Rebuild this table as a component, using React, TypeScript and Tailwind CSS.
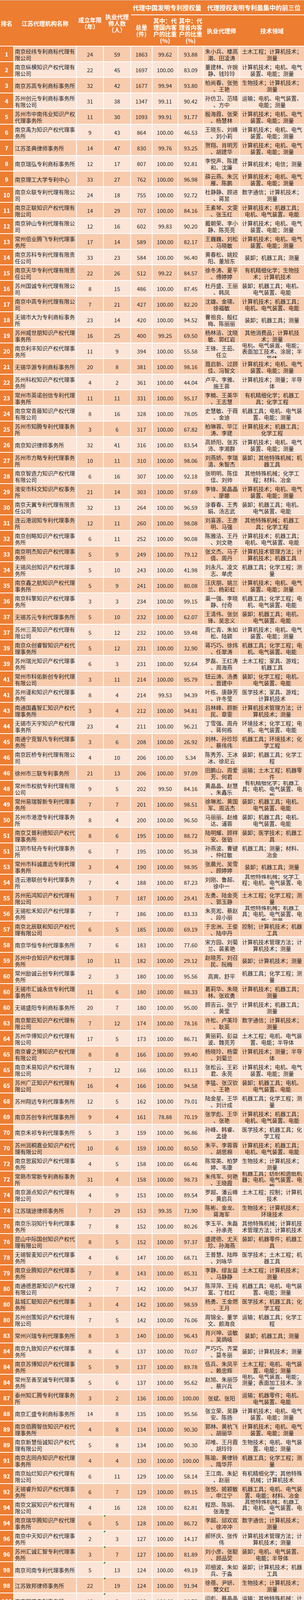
const COLS =
  "grid grid-cols-[34px_159px_67px_68px_53px_64px_63px_91px_164px] gap-x-[2px]";

// rank|name|years|staff|total|national%|province%|agents (/ = line break)|fields (/ = line break)
const RAW = `1|南京经纬专利商标代理有限公司|24|59|1863|99.62|93.88|朱小兵、楼高/潮、田凌涛|土木工程；计算机技术；/测量
2|南京纵横知识产权代理有限公司|22|45|1697|100.00|83.09|董建林、许婉/静、钱玲玲|计算机技术；电机、电气/装置、电能；测量
3|南京苏高专利商标事务所|32|42|1677|99.94|93.80|柏尚春、张弛/、王艳|生物技术；计算机技术；/测量
4|苏州创元专利商标事务所有限公司|31|38|1347|99.11|90.42|孙仿卫、范晴/、方中|运输；电机、电气装置、/电能；测量
5|苏州市中南伟业知识产权代理事务所|11|30|1093|99.91|91.77|殷海霞、张荣/、杨慧林|计算机技术；电机、电气/装置、电能；测量
6|南京禹为知识产权代理事务所|9|43|864|100.00|46.53|王晓东、刘峰/、刘小莉|计算机技术；电机、电气/装置、电能；测量
7|江苏圣典律师事务所|14|47|830|99.76|93.25|贺翔、肖明芳/、胡建华|计算机技术；电机、电气/装置、电能；测量
8|南京瑞弘专利商标事务所|12|17|807|100.00|92.81|李悦声、陈建/和、沈廉|计算机技术；电信；测量
9|南京理工大学专利中心|33|27|762|100.00|96.98|薛云燕、朱沉/雁、陈鹏|计算机技术；电机、电气/装置、电能；测量
10|南京众联专利代理有限公司|24|18|755|100.00|92.72|杜静静、顾进/、蒋昱|数字通信；计算机技术；/测量
11|南京正联知识产权代理有限公司|14|29|707|100.00|84.16|王素琴、文雯/、张玉红|计算机技术；机器工具；/电机、电气装置、电能
12|南京钟山专利代理有限公司|12|16|602|99.83|90.20|戴朝荣、李小/静、陈亮亮|计算机技术；电机、电气/装置、电能；测量
13|常州佰业腾飞专利代理事务所|17|14|589|100.00|82.17|王巍巍、刘松/、马晓敏|计算机技术；电机、电气/装置、电能；测量
14|南京苏科专利代理有限责任公司|33|23|584|100.00|96.40|黄春松、姚姣/阳、董旭东|装卸；机器工具；测量
15|南京天华专利代理有限责任公司|22|26|512|99.22|84.57|徐冬涛、夏平/、傅婷婷|有机精细化学；生物技/术；计算机技术
16|苏州国诚专利代理有限公司|8|15|486|100.00|87.45|杜丹盛、王丽/、韩凤|装卸；机器工具；电机、/电气装置、电能
17|南京中高专利代理有限公司|7|21|427|100.00|82.20|沈雄、金啸、/徐福敏|计算机技术；机器工具；/电机、电气装置、电能
18|无锡市大为专利商标事务所|23|14|420|100.00|94.52|曹祖良、殷红/梅、陈丽丽|装卸；机器工具；测量
19|苏州威世朋知识产权代理事务所|16|25|400|99.25|69.50|杨林洁、沈晓/敏、郭红岩|其他消费品；计算机技/术；测量
20|南京利丰知识产权代理事务所|11|9|394|100.00|55.58|王锋、王茹、/任立|电机、电气装置、电能；/表面加工技术、涂层；半/导体
21|无锡华源专利商标事务所|20|8|381|100.00|98.16|聂启新、过顾/佳、冯智文|计算机技术；电机、电气/装置、电能；测量
22|苏州科权知识产权代理事务所|4|2|361|100.00|44.04|卢平、李雅、/施王蓉|计算机技术；测量；半导/体
23|常州市英诺创信专利代理事务所|11|11|331|100.00|95.17|李楠、王美华/、王志慧|有机精细化学；机器工/具；化学工程
24|南京常青藤知识产权代理有限公司|8|16|328|100.00|78.05|史慧敏、于薇/、金迪|机器工具；电机、电气装/置、电能；测量
25|苏州市知腾专利代理事务所|3|6|317|100.00|67.82|柏琳蓉、毕江/涛、李建|计算机技术；机器工具；/化学工程
26|南京知识律师事务所|32|41|316|100.00|83.54|高娇阳、张苏/沛、李湘群|计算机技术；电机、电气/装置、电能；测量
27|苏州市方略专利代理事务所|10|11|310|100.00|98.06|刘燕娇、李瑞/清、朱智杰|装卸；其他特殊机械；机/器工具
28|南京智造力知识产权代理有限公司|6|16|307|100.00|92.18|张明明、陈佳/佳、刘帅|其他特殊机械；化学工/程；材料、冶金
29|淮安市科文知识产权事务所|21|14|303|100.00|97.69|李锋、吴晶晶/、廖娜|计算机技术；电机、电气/装置、电能；测量
30|南京天翼专利代理有限责任公司|32|13|264|100.00|96.59|涂春春、王秀/娟、汤志武|装卸；机器工具；电机、/电气装置、电能
31|连云港润知专利代理事务所|12|11|260|100.00|98.08|刘喜莲、王彦/明、马强|其他特殊机械；机器工/具；化学工程
32|南京创略知识产权代理事务所|6|11|252|100.00|90.08|陈雅洁、王丹/、刘文艳|计算机技术；机器工具；/电机、电气装置、电能
33|南京明杰知识产权代理事务所|5|9|249|100.00|79.12|张文杰、马子/倩、周丹|计算机技术管理方法；计/算机技术；机器工具
34|无锡风创知识产权代理事务所|5|10|243|100.00|41.98|刘永凡、凌文/志、单虎|机器工具；化学工程；测/量
35|南京鑫之航知识产权代理事务所|5|9|241|100.00|80.08|汪庆朋、姚兰/兰、杨彩虹|计算机技术；电机、电气/装置、电能；测量
36|南京科擎知识产权代理事务所|3|3|234|100.00|99.15|巢一强、李晓/静、付奇|机器工具；化学工程；电/机、电气装置、电能
37|无锡苏元专利代理事务所|5|10|232|100.00|62.07|王清伟、张剑/锋、吴忠义|装卸；机器工具；电机、/电气装置、电能
37|苏州三英知识产权代理有限公司|5|12|232|100.00|59.48|周仁青、朱如/松、陆颖|计算机技术；电机、电气/装置、电能；测量
39|南京众创睿智知识产权代理事务所|5|12|231|100.00|32.90|蒋巧巧、徐炜/、任翠涛|机器工具；化学工程；电/机、电气装置、电能
39|苏州瑞光知识产权代理事务所|6|3|231|100.00|92.64|罗磊、王红涛/、周海燕|土木工程；家具、游戏；/机器工具
41|常州市科佑新创专利代理有限公司|3|11|214|100.00|95.79|钮云涛、汤勇/、晋建中|装卸；化学工程；电机、/电气装置、电能
41|苏州谨和知识产权代理事务所|8|4|214|99.53|94.39|叶栋、唐静芳/、许冬莹|医学技术；家具、游戏；/计算机技术
43|南通国鑫智汇知识产权代理事务所|3|4|212|100.00|94.81|吕林峰、顾新/民、章雯|计算机技术管理方法；计/算机技术；测量
44|无锡市天宇知识产权代理事务所|23|4|211|100.00|96.21|丁雪强、周舟/、蒋何栋|环境技术；化学工程；电/机、电气装置、电能
45|南通宁竞智凡专利代理事务所|3|6|208|100.00|26.92|刘林、孙珍珍/、蔡伟伟|机器工具；环境技术；化/学工程
46|南京匠桥专利代理有限公司|4|10|206|100.00|5.34|陈秀芳、王冰/冰、徐尼云|装卸；机器工具；化学工/程
46|徐州市三联专利事务所|21|13|206|100.00|97.09|田鹏山、周爱/芳、何君|运输；土木工程；机器零/件
48|常州市权航专利代理有限公司|9|5|202|99.50|84.16|黄晶晶、赵慧/、朱鑫乐|有机精细化学；机器工/具；电机、电气装置、电/能
49|常州易瑞智新专利代理事务所|7|7|201|100.00|98.51|徐琳淞、黄国/军、周洁杰|装卸；机器工具；电机、/电气装置、电能
50|苏州市港澄专利代理事务所|8|4|200|100.00|96.50|马丽丽、赵维/达、浦蓉|装卸；机器工具；电机、/电气装置、电能
51|南京艾普利德知识产权代理事务所|8|6|195|100.00|88.72|陆明耀、顾祥/安、张铂|装卸；医学技术；机器工/具
51|江阴市轻舟专利代理事务所|6|7|195|100.00|95.38|孙燕波、曹键/、仲红敏|机器工具；测量；材料、/冶金
53|常州市科诚嘉远专利代理事务所|3|4|190|100.00|98.95|张晨光、吴雪/、顾婷婷|装卸；机器工具；测量
54|连云港联创专利代理事务所|7|4|188|100.00|87.23|刘刚、鲁超、/徐中一|其他特殊机械；化学工/程；电机、电气装置、电/能
55|苏州拓鸿知识产权代理有限公司|3|7|187|100.00|29.41|左勇、陆金亮/、郭玉静|土木工程；化学工程；测/量
56|无锡松禾知识产权代理事务所|7|7|186|100.00|83.33|朱亮淞、蔡赵/、段小丽|其他特殊机械；机器工/具；电机、电气装置、电/能；测量
57|南京北辰联和知识产权代理有限公司|6|5|185|100.00|69.19|于忠洲、王俊/、陆中丹|控制；计算机技术；机器/工具
58|南京华恒专利代理事务所|7|6|183|100.00|77.60|宋方园、刘菊/兰、裴素艳|计算机技术管理方法；计/算机技术；测量
59|苏州中合知识产权代理事务所|10|11|182|100.00|29.12|赵晓芳、刘召/民、阮梅|装卸；计算机技术；测量
60|常州励诚云创专利代理事务所|2|3|180|100.00|95.56|高爽、舒平|机器工具；化学工程；测/量
60|无锡市汇诚永信专利代理事务所|11|6|180|100.00|88.33|葛莉华、朱晓/林、张欢勇|计算机技术；机器工具；/测量
60|无锡盛阳专利商标事务所|20|7|180|100.00|95.00|顾吉云、张宁/、黄莹|计算机技术；机器工具；/测量
63|南京聚匠知识产权代理有限公司|7|12|174|100.00|78.16|许松、卢美玲/、耿英|数字通信；计算机技术；/测量
64|苏州华博知识产权代理有限公司|17|5|173|100.00|86.71|黄丽莉、彭益/波、魏亮芳|土木工程；电机、电气装/置、电能；半导体
65|南京睿之博知识产权代理有限公司|8|8|166|100.00|99.40|杨晓玲、杨雷/、刘菊兰|计算机技术；测量；半导/体
65|南京禾易知识产权代理有限公司|7|12|166|100.00|83.13|张松云、王彩/君、永亮|计算机技术；电机、电气/装置、电能；测量
65|苏州广正知识产权代理有限公司|16|4|166|100.00|94.58|李猛、张汉钦/、王艳|装卸；机器工具；电机、/电气装置、电能
68|苏州翔远专利代理事务所|12|5|162|100.00|79.01|陆金星、王华/、刘计成|机器工具；化学工程；测/量
69|南京苏创专利代理事务所|9|4|161|78.88|70.19|张学彪、王华/、张艳|计算机技术；机器工具；/电机、电气装置、电能
70|南京禾祁专利代理事务所|5|3|159|100.00|96.86|孙峰、韩睿、/孟捷|医学技术；机器工具；化/学工程
70|苏州润桐嘉业知识产权代理有限公司|10|6|159|100.00|80.50|朱平、李蓉蓉/、胡思棉|计算机技术；机器工具；/电机、电气装置、电能
72|南京思宸知识产权代理事务所|4|5|158|100.00|66.46|陈常美、柏梦/婷、韦康|生物技术；计算机技术；/测量
72|常熟市常新专利商标事务所|31|4|158|100.00|98.73|朱伟军、何艳/、王晓霞|机器工具；纺织和造纸机/器；电机、电气装置、电/能
74|南京源点知识产权代理有限公司|4|9|153|100.00|89.54|罗超、潘云峰/、黄启兵|土木工程；控制；计算机/技术
74|江苏瑞途律师事务所|7|29|153|99.35|71.90|陈彬、金龙、/蒋海军|生物技术；计算机技术；/环境技术
76|南京乐羽知行专利代理事务所|7|8|152|100.00|80.26|李玉平、朱磊/、孙承尧|其他特殊机械；计算机技/术管理方法；计算机技术
76|昆山中际国创知识产权代理有限公司|8|5|152|100.00|97.37|盛建德、尤天/珍、孙海燕|装卸；机器零件；机器工/具
78|无锡智麦知识产权代理事务所|4|6|147|100.00|68.71|王普慧、陆晔/、刘咏华|医学技术；土木工程；机/器工具
79|南京业腾知识产权代理事务所|7|8|143|100.00|85.31|李静、缪友益/、马静静|土木工程；计算机技术；/测量
80|南通德恩斯知识产权代理有限公司|2|7|142|100.00|94.37|陈萍萍、王纯/富、丁桂红|机器工具；电机、电气装/置、电能；测量
80|盐城汇聪知识产权代理事务所|3|4|142|100.00|98.59|杨勇、王金燃/、王月|医学技术；机器工具；化/学工程
80|苏州创策知识产权代理有限公司|7|5|142|100.00|76.06|周锦全、董学/文、颜海良|运输；机器工具；化学工/程
83|常州兴瑞专利代理事务所|8|3|140|100.00|96.43|肖兴坤、谈敏/、吴炳岐|装卸；机器工具；测量
84|南京九致知识产权代理事务所|8|6|137|100.00|70.07|严巧巧、齐棠/、莫冬丽|装卸；计算机技术；测量
84|南京苏博知识产权代理事务所|5|9|137|100.00|89.78|伍兵、朱凤平/、赖忠辉|土木工程；电机、电气装/置、电能；测量
84|常州至善至诚专利代理事务所|5|6|137|100.00|95.62|赵旭、朱丽莎/、蔡兴兵|电机、电气装置、电能；/测量；表面加工技术、涂/层
87|泰州知汇腾专利代理事务所|3|2|136|100.00|100.00|张斌、张阳|运输；机器零件；电机、/电气装置、电能
88|南京汇盛专利商标事务所|14|8|135|100.00|95.56|张立荣、吴静/安、陈扬|计算机技术；电机、电气/装置、电能；测量
89|南京佰腾智信知识产权代理事务所|4|8|134|100.00|90.30|郭林、黄杭飞/、胡丽华|计算机技术；电机、电气/装置、电能；测量
89|南京新慧恒诚知识产权代理有限公司|5|8|134|100.00|90.30|邓唯、王月霞/、胡玲玲|生物技术；电机、电气装/置、电能；测量
91|南京志同舟知识产权代理事务所|4|4|130|100.00|100.00|陈瑜、黄律铃/、隋华芹|机器工具；化学工程；测/量
92|南京灿烂知识产权代理有限公司|6|11|129|100.00|58.14|王江南、朱妃/、赵丽|有机精细化学；其他特殊/机械；计算机技术
92|无锡睿升知识产权代理事务所|6|7|129|100.00|89.15|张悦、姬颖敏/、申江宁|机器工具；电机、电气装/置、电能；材料、冶金
94|南京文宸知识产权代理有限公司|4|16|128|100.00|82.81|程昂、陈娟、/张海奎|其他特殊机械；机器工/具；电机、电气装置、电/能
94|南京瑞华腾知识产权代理事务所|6|5|128|100.00|86.72|李超、邱欢欢/、徐冲冲|数字通信；计算机技术；/测量
96|南京中天知识产权代理事务所|2|3|127|100.00|14.17|郝怀庆、张传/伟|计算机技术管理方法；计/算机技术；测量
96|苏州汇诚汇智专利代理事务所|3|7|127|100.00|81.89|刘小彦、张聪/、顾品荧|装卸；电机、电气装置、/电能；半导体
98|南京司南专利代理事务所|5|13|124|100.00|49.19|邓细波、朱如/兵、于淼|装卸；计算机技术；机器/工具
98|江苏致邦律师事务所|22|19|124|100.00|91.94|徐蓓、尹妍、/樊文红|生物技术；计算机技术；/测量
100|南京同泽专利事务所|13|3|123|100.00|96.75|闫彪、蔡晶晶/、赵洪玉|运输；其他特殊机械；计/算机技术
100|常州市科谊专利代理事务所|20|7|123|100.00|90.24|孙彬、许瑞成/、何欢欢|运输；电机、电气装置、/电能；测量`;

type Row = {
  rank: string;
  name: string;
  years: string;
  staff: string;
  total: string;
  nat: string;
  prov: string;
  agents: string[];
  fields: string[];
};

const rows: Row[] = RAW.split("\n").map((line) => {
  const [rank, name, years, staff, total, nat, prov, agents, fields] = line.split("|");
  return {
    rank,
    name,
    years,
    staff,
    total,
    nat,
    prov,
    agents: agents.split("/"),
    fields: fields.split("/"),
  };
});

function Lines({ lines }: { lines: string[] }) {
  return (
    <div className="flex flex-col items-center leading-[16.5px]">
      {lines.map((l, i) => (
        <span key={i} className="whitespace-nowrap">
          {l}
        </span>
      ))}
    </div>
  );
}

function Header() {
  return (
    <div
      className={`${COLS} grid-rows-[36px_2px_78px] bg-[#ED7D31] border-t border-[#cfcfcf] text-white font-bold text-[15px] leading-[17px]`}
    >
      <div className="row-span-3 flex items-center justify-center">排名</div>
      <div className="row-span-3 flex items-center justify-center">江苏代理机构名称</div>
      <div className="row-span-3 flex items-center justify-center text-center">
        成立年限
        <br />
        （年）
      </div>
      <div className="row-span-3 flex items-center justify-center text-center">
        执业代理
        <br />
        师人数
        <br />
        （人）
      </div>
      <div className="col-start-5 col-span-3 flex items-center justify-center text-[16px]">
        代理中国发明专利授权量
      </div>
      <div className="col-start-8 col-span-2 flex items-center justify-center text-[16px]">
        代理授权发明专利最集中的前三位
      </div>
      <div className="col-start-5 col-span-5 bg-white" />
      <div className="col-start-5 flex items-center justify-center text-center">
        总量
        <br />
        (件)
      </div>
      <div className="flex items-center justify-center text-center">
        其中：代
        <br />
        理国内客
        <br />
        户的比重
        <br />
        (%)
      </div>
      <div className="flex items-center justify-center text-center">
        其中：代
        <br />
        理省内客
        <br />
        户的比重
        <br />
        (%)
      </div>
      <div className="flex items-center justify-center">执业代理师</div>
      <div className="flex items-center justify-center">技术领域</div>
    </div>
  );
}

function DataRow({ row, index }: { row: Row; index: number }) {
  const bg = index % 2 === 0 ? "bg-[#F8CBAD]" : "bg-[#FCE4D6]";
  const cell = `${bg} flex items-center justify-center overflow-hidden pt-[3px]`;
  return (
    <div className={`${COLS} h-[38px]`}>
      <div className="bg-[#ED7D31] flex items-center justify-center pt-[3px] text-white font-bold text-[15px]">
        {row.rank}
      </div>
      <div className={`${bg} flex items-center overflow-hidden pl-[2px] pt-[3px] leading-[16.5px]`}>
        <span>{row.name}</span>
      </div>
      <div className={cell}>{row.years}</div>
      <div className={`${cell} relative`}>
        {index >= 94 && (
          <span className="absolute left-0 top-0 w-0 h-0 border-t-[5px] border-r-[6px] border-t-[#2e8b22] border-r-transparent" />
        )}
        {row.staff}
      </div>
      <div className={cell}>{row.total}</div>
      <div className={cell}>{row.nat}</div>
      <div className={cell}>{row.prov}</div>
      <div className={cell}>
        <Lines lines={row.agents} />
      </div>
      <div className={cell}>
        <Lines lines={row.fields} />
      </div>
    </div>
  );
}

export default function App() {
  return (
    <div className="w-[779px] bg-white font-['Noto_Sans_CJK_SC','Liberation_Sans',sans-serif] text-[14px] text-[#262626]">
      <Header />
      <div className="flex flex-col gap-[2px] pt-[2px]">
        {rows.map((row, i) => (
          <DataRow key={i} row={row} index={i} />
        ))}
      </div>
    </div>
  );
}
